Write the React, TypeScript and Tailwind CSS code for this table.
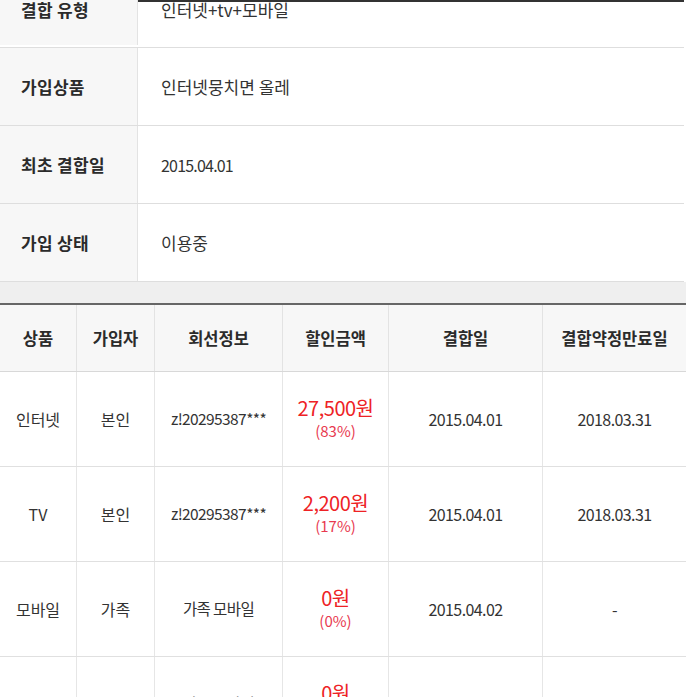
const font = { fontFamily: '"Noto Sans CJK KR", "Noto Sans", sans-serif' };

const info = [
  { label: '결합 유형', value: '인터넷+tv+모바일', num: false },
  { label: '가입상품', value: '인터넷뭉치면 올레', num: false },
  { label: '최초 결합일', value: '2015.04.01', num: true },
  { label: '가입 상태', value: '이용중', num: false },
];

const heads = ['상품', '가입자', '회선정보', '할인금액', '결합일', '결합약정만료일'];

const rows = [
  { item: '인터넷', who: '본인', line: 'z!20295387***', amount: '27,500원', pct: '(83%)', date: '2015.04.01', end: '2018.03.31' },
  { item: 'TV', who: '본인', line: 'z!20295387***', amount: '2,200원', pct: '(17%)', date: '2015.04.01', end: '2018.03.31' },
  { item: '모바일', who: '가족', line: '가족 모바일', amount: '0원', pct: '(0%)', date: '2015.04.02', end: '-' },
  { item: '모바일', who: '가족', line: '가족 모바일', amount: '0원', pct: '(0%)', date: '2015.04.02', end: '-' },
];

const grid = 'grid grid-cols-[77px_78px_128px_106px_154px_1fr]';

export default function App() {
  return (
    <div className="w-[686px] h-[697px] overflow-hidden bg-white text-[#333]" style={font}>
      {/* 결합 정보 */}
      <div className="w-[684px] border-t-2 border-[#333]">
        {info.map((r, i) => (
          <div
            key={r.label}
            className={`flex border-b border-[#dedede] ${i === 0 ? 'h-[46px] items-start' : 'h-[78px] items-stretch'}`}
          >
            <div
              className={`w-[138px] shrink-0 bg-[#f7f7f7] border-r border-[#e3e3e3] pl-[21px] flex text-[17px] font-bold text-[#2b2b2b] tracking-[0.3px] ${
                i === 0 ? 'h-full items-start -mt-[2px]' : 'items-center'
              }`}
            >
              <span className="leading-[20px]">{r.label}</span>
            </div>
            <div
              className={`pl-[23px] flex text-[#333] ${r.num ? 'text-[16px] tracking-[-0.8px]' : 'text-[17px]'} ${
                i === 0 ? '-mt-[2px]' : 'items-center'
              }`}
            >
              <span className="leading-[20px]">{r.value}</span>
            </div>
          </div>
        ))}
      </div>

      <div className="h-[21px] bg-[#efefef]" />

      {/* 결합 상품 목록 */}
      <div className="border-t-2 border-[#666]">
        <div className={`${grid} h-[67px] bg-[#f7f7f7] border-b border-[#d8d8d8]`}>
          {heads.map((h, i) => (
            <div
              key={h}
              className={`flex items-center justify-center text-[16.5px] font-bold text-[#2b2b2b] ${
                i < 5 ? 'border-r border-[#e3e3e3]' : ''
              }`}
            >
              {h}
            </div>
          ))}
        </div>
        {rows.map((r, idx) => (
          <div key={idx} className={`${grid} h-[95px] border-b border-[#e0e0e0] text-[16px] text-[#333]`}>
            <div className="flex items-center justify-center border-r border-[#e6e6e6]">{r.item}</div>
            <div className="flex items-center justify-center border-r border-[#e6e6e6]">{r.who}</div>
            <div className="flex items-center justify-center border-r border-[#e6e6e6] text-[15.5px] tracking-[-0.6px]">
              {r.line}
            </div>
            <div className="flex flex-col items-center justify-center border-r border-[#e6e6e6] pb-[3px]">
              <span className="text-[20px] leading-[26px] text-[#ee2225] tracking-[-0.5px]">{r.amount}</span>
              <span className="text-[15px] leading-[20px] text-[#e8394f]">{r.pct}</span>
            </div>
            <div className="flex items-center justify-center border-r border-[#e6e6e6] tracking-[-0.6px]">{r.date}</div>
            <div className="flex items-center justify-center tracking-[-0.6px]">{r.end}</div>
          </div>
        ))}
      </div>
    </div>
  );
}
